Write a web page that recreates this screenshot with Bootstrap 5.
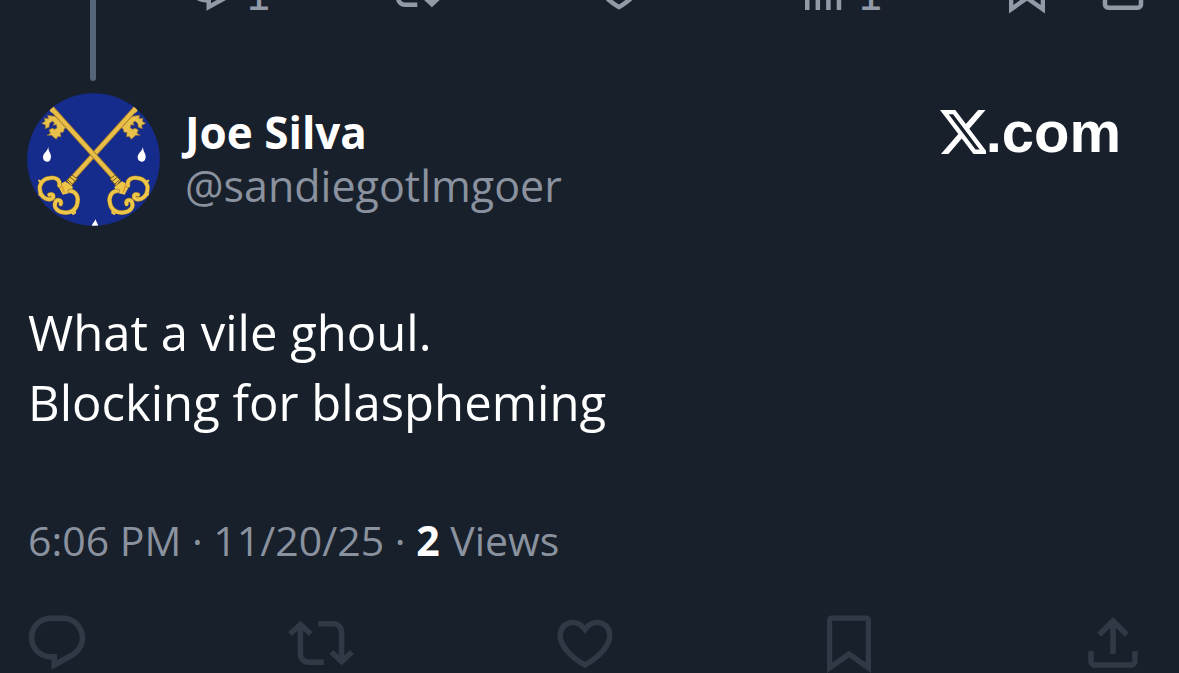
<!DOCTYPE html>
<html lang="en">
<head>
<meta charset="utf-8">
<meta name="viewport" content="width=device-width, initial-scale=1">
<title>Joe Silva on X</title>
<link rel="stylesheet" href="https://cdn.jsdelivr.net/npm/bootstrap@5.3.0/dist/css/bootstrap.min.css">
<style>
  body { background: #18202b; color: #fff; font-family: "Open Sans", "Noto Sans", sans-serif; min-height: 100vh; overflow: hidden; }
  svg { display: block; fill: currentColor; flex: none; }
  .muted { color: #8b929f; }
  .icon-btn { background: none; border: 0; padding: 0; color: inherit; display: flex; align-items: center; }
  .prev-actions { height: 16px; padding: 0 29px 0 184px; overflow: hidden; color: #929aa8; }
  .prev-actions svg { width: 54px; height: 54px; }
  .prev-end { gap: 42px; }
  .prev-count { font: 42px/40px "DejaVu Sans", sans-serif; margin-left: 7px; padding-top: 14px; }
  .thread { position: absolute; left: 90px; top: 0; width: 6px; height: 81px; border-radius: 0 0 3px 3px; background: #566577; }
  .post-head { margin: 77px 58px 0 27px; }
  .avatar { width: 133px; height: 133px; margin-right: 25px; }
  .names { padding-top: 12px; }
  .author { font-size: 44px; line-height: 54px; font-weight: 700; }
  .handle { font-size: 43px; line-height: 54px; }
  .brand { font: 700 58px/66px "Liberation Sans", sans-serif; color: #fff; padding-top: 6px; }
  .brand svg { width: 46px; height: 54px; }
  .post-text { font-size: 49px; line-height: 70px; margin: 71px 28px 0; }
  .post-meta { font-size: 41px; line-height: 56px; margin: 75px 28px 0; }
  .actions { color: #303a47; padding: 0 33px 0 24px; margin-top: 42px; }
  .actions svg { width: 66px; height: 66px; }
</style>
</head>
<body>
<svg class="d-none" aria-hidden="true">
  <symbol id="reply" viewBox="0 0 24 24"><path d="M1.751 10c0-4.42 3.584-8 8.005-8h4.366c4.49 0 8.129 3.64 8.129 8.13 0 2.96-1.607 5.68-4.196 7.11l-8.054 4.46v-3.69h-.067c-4.49.1-8.183-3.51-8.183-8.01zm8.005-6c-3.317 0-6.005 2.69-6.005 6 0 3.37 2.77 6.08 6.138 6.01l.351-.01h1.761v2.3l5.087-2.81c1.951-1.08 3.163-3.13 3.163-5.36 0-3.39-2.744-6.13-6.129-6.13H9.756z"/></symbol>
  <symbol id="repost" viewBox="0 0 24 24"><path d="M4.5 3.88l4.432 4.14-1.364 1.46L5.5 7.55V16c0 1.1.896 2 2 2H13v2H7.5c-2.209 0-4-1.79-4-4V7.55L1.432 9.48.068 8.02 4.5 3.88zM16.5 6H11V4h5.5c2.209 0 4 1.79 4 4v8.45l2.068-1.93 1.364 1.46-4.432 4.14-4.432-4.14 1.364-1.46 2.068 1.93V8c0-1.1-.896-2-2-2z"/></symbol>
  <symbol id="like" viewBox="0 0 24 24"><path d="M16.697 5.5c-1.222-.06-2.679.51-3.89 2.16l-.805 1.09-.806-1.09C9.984 6.01 8.526 5.44 7.304 5.5c-1.243.07-2.349.78-2.91 1.91-.552 1.12-.633 2.78.479 4.82 1.074 1.97 3.257 4.27 7.129 6.61 3.87-2.34 6.052-4.64 7.126-6.61 1.111-2.04 1.03-3.7.477-4.82-.561-1.13-1.666-1.84-2.908-1.91zm4.187 7.69c-1.351 2.48-4.001 5.12-8.379 7.67l-.503.3-.504-.3c-4.379-2.55-7.029-5.19-8.382-7.67-1.36-2.5-1.41-4.86-.514-6.67.887-1.79 2.647-2.91 4.601-3.01 1.651-.09 3.368.56 4.798 2.01 1.429-1.45 3.146-2.1 4.796-2.01 1.954.1 3.714 1.22 4.601 3.01.896 1.81.846 4.17-.514 6.67z"/></symbol>
  <symbol id="save" viewBox="0 0 24 24"><path fill-rule="evenodd" d="M4 3.7C4 2.7 4.7 2 5.7 2h12.6c1 0 1.7.7 1.7 1.7v19.24l-8-5.71-8 5.71V3.7zM5.9 3.9v15.2l6.1-4.3 6.1 4.3V3.9z"/></symbol>
  <symbol id="share" viewBox="0 0 24 24"><path d="M12 2.59l5.7 5.7-1.41 1.42L13 6.41V16h-2V6.41l-3.3 3.3-1.41-1.42L12 2.59zM21 15l-.02 3.51c0 1.38-1.12 2.49-2.5 2.49H5.5C4.11 21 3 19.88 3 18.5V15h2v3.5c0 .28.22.5.5.5h12.98c.28 0 .5-.22.5-.5L19 15h2z"/></symbol>
  <symbol id="stats" viewBox="0 0 24 24"><path d="M4 10h2v11.3H4zM8.7 3h2v18.3h-2zM13.4 8h2v13.3h-2zM18.1 4h2v17.3h-2z"/></symbol>
</svg>
<main class="container-fluid p-0 position-relative">
  <div class="thread"></div>
  <div class="prev-actions d-flex align-items-end">
    <div class="row row-cols-4 g-0 flex-grow-1 flex-nowrap">
      <div class="col"><button class="icon-btn" aria-label="Replies"><svg><use href="#reply"/></svg><span class="prev-count">1</span></button></div>
      <div class="col"><button class="icon-btn" aria-label="Repost"><svg><use href="#repost"/></svg></button></div>
      <div class="col"><button class="icon-btn" aria-label="Like"><svg><use href="#like"/></svg></button></div>
      <div class="col"><button class="icon-btn" aria-label="Views"><svg><use href="#stats"/></svg><span class="prev-count">1</span></button></div>
    </div>
    <div class="prev-end d-flex">
      <button class="icon-btn" aria-label="Bookmark"><svg><use href="#save"/></svg></button>
      <button class="icon-btn" aria-label="Share"><svg viewBox="0 0 24 24"><path fill-rule="evenodd" d="M3 9h18v9.8c0 1.4-1.1 2.5-2.5 2.5h-13C4.1 21.3 3 20.2 3 18.8zM5 11v7.8c0 .3.2.5.5.5h13c.3 0 .5-.2.5-.5V11z"/></svg></button>
    </div>
  </div>

  <header class="post-head d-flex align-items-start">
    <svg class="avatar" viewBox="51 39 399 399" role="img" aria-label="Joe Silva">
      <defs><clipPath id="disc"><circle cx="250.5" cy="238.5" r="199"/></clipPath>
        <g id="key" stroke-linecap="round" stroke-linejoin="round">
          <path d="M135 109L113 106 115 116 103 114 105 124 95 130 107 136 105 146 117 142 119 130 127 124 133 128 129 136 139 134 141 144 133 148 127 144 117 150 121 160 111 166 125 166 131 172 139 178 143 170 153 170 151 158 161 156 163 146 173 142z" fill="#e8c04c" stroke="#8d6a35" stroke-width="2"/>
          <path d="M125 85L312 292" fill="none" stroke="#9c752c" stroke-width="17" stroke-linecap="butt"/>
          <path d="M125 85L312 292" fill="none" stroke="#e8be49" stroke-width="12" stroke-linecap="butt"/>
          <path d="M119 92l11-11 5 8-9 10z" fill="#e8be49"/>
          <path d="M301 296l15-11 16 17-13 15z" fill="#edc549" stroke="#72571f" stroke-width="3"/>
          <path d="M306 304l18-14M314 313l17-16" stroke="#72571f" stroke-width="3"/>
          <path d="M313 321l23-17 17 9 1 12-10 19-24-6z" fill="#edc549"/>
          <g fill="none" stroke="#85682e" stroke-width="14">
            <path id="bow" d="M354 317C350 297 368 291 382 294C404 296 416 314 412 331C411 348 395 360 382 358C367 355 370 338 384 344M322 333C304 333 295 351 300 370C303 390 322 401 342 397C359 396 372 382 366 367C361 356 345 360 350 372"/>
          </g>
          <use href="#bow" fill="none" stroke="#edc549" stroke-width="11"/>
          <path d="M407 307l8-5M408 342l6 2M308 384l-1 15M319 394l-7 8" stroke="#edc549" stroke-width="6"/>
          <path d="M346 318l-6 18" stroke="#d99a32" stroke-width="4"/>
        </g>
      </defs>
      <g clip-path="url(#disc)">
        <path fill="#162c8d" d="M50 38h402v402H50z"/>
        <use href="#key" transform="matrix(-1 0 0 1 502 0)"/>
        <use href="#key"/>
        <g fill="#fff"><path id="drop" d="M115 201c0 14 8 18 8 29 0 9-5 15-12 15s-12-5-12-13c0-12 12-16 16-31z"/><use href="#drop" x="284"/><path d="M257 417c1 9 7 13 8 22h-20c1-9 9-13 12-22z"/></g>
      </g>
    </svg>
    <div class="names flex-grow-1">
      <div class="author">Joe Silva</div>
      <div class="handle muted">@sandiegotlmgoer</div>
    </div>
    <a class="brand d-flex align-items-center text-decoration-none" href="#" aria-label="X.com"><svg viewBox="1.25 0 20.5 24"><path d="M18.244 2.25h3.308l-7.227 8.26 8.502 11.24H16.17l-5.214-6.817L4.99 21.75H1.68l7.73-8.835L1.254 2.25H8.08l4.713 6.231zm-1.161 17.52h1.833L7.084 4.126H5.117z"/></svg>.com</a>
  </header>

  <p class="post-text">What a vile ghoul.<br>Blocking for blaspheming</p>
  <div class="post-meta muted">6:06 PM · 11/20/25 · <strong class="text-white">2</strong> Views</div>

  <div class="actions d-flex justify-content-between">
    <button class="icon-btn" aria-label="Reply"><svg><use href="#reply"/></svg></button>
    <button class="icon-btn" aria-label="Repost this post"><svg><use href="#repost"/></svg></button>
    <button class="icon-btn" aria-label="Like this post"><svg><use href="#like"/></svg></button>
    <button class="icon-btn" aria-label="Bookmark this post"><svg><use href="#save"/></svg></button>
    <button class="icon-btn" aria-label="Share this post"><svg><use href="#share"/></svg></button>
  </div>
</main>
<script src="https://cdn.jsdelivr.net/npm/bootstrap@5.3.0/dist/js/bootstrap.bundle.min.js"></script>
</body>
</html>
